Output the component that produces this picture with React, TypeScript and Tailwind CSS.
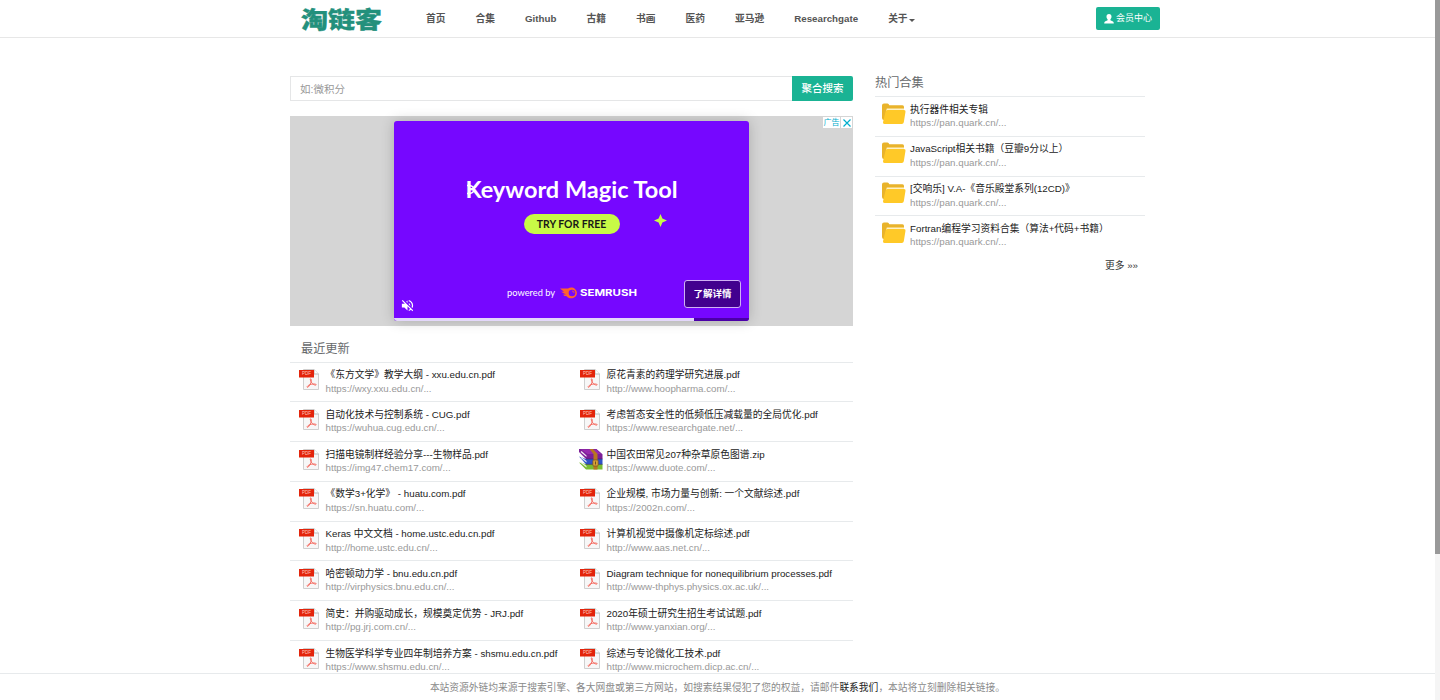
interface Resource {
  title: string;
  url: string;
  zip?: boolean;
}

const NAV = ['首页', '合集', 'Github', '古籍', '书画', '医药', '亚马逊', 'Researchgate'];

const RECENT: [Resource, Resource][] = [
  [
    { title: '《东方文学》教学大纲 - xxu.edu.cn.pdf', url: 'https://wxy.xxu.edu.cn/...' },
    { title: '原花青素的药理学研究进展.pdf', url: 'http://www.hoopharma.com/...' },
  ],
  [
    { title: '自动化技术与控制系统 - CUG.pdf', url: 'https://wuhua.cug.edu.cn/...' },
    { title: '考虑暂态安全性的低频低压减载量的全局优化.pdf', url: 'https://www.researchgate.net/...' },
  ],
  [
    { title: '扫描电镜制样经验分享---生物样品.pdf', url: 'https://img47.chem17.com/...' },
    { title: '中国农田常见207种杂草原色图谱.zip', url: 'https://www.duote.com/...', zip: true },
  ],
  [
    { title: '《数学3+化学》 - huatu.com.pdf', url: 'https://sn.huatu.com/...' },
    { title: '企业规模, 市场力量与创新: 一个文献综述.pdf', url: 'https://2002n.com/...' },
  ],
  [
    { title: 'Keras 中文文档 - home.ustc.edu.cn.pdf', url: 'http://home.ustc.edu.cn/...' },
    { title: '计算机视觉中摄像机定标综述.pdf', url: 'http://www.aas.net.cn/...' },
  ],
  [
    { title: '哈密顿动力学 - bnu.edu.cn.pdf', url: 'http://virphysics.bnu.edu.cn/...' },
    { title: 'Diagram technique for nonequilibrium processes.pdf', url: 'http://www-thphys.physics.ox.ac.uk/...' },
  ],
  [
    { title: '简史：并购驱动成长，规模奠定优势 - JRJ.pdf', url: 'http://pg.jrj.com.cn/...' },
    { title: '2020年硕士研究生招生考试试题.pdf', url: 'http://www.yanxian.org/...' },
  ],
  [
    { title: '生物医学科学专业四年制培养方案 - shsmu.edu.cn.pdf', url: 'https://www.shsmu.edu.cn/...' },
    { title: '综述与专论微化工技术.pdf', url: 'http://www.microchem.dicp.ac.cn/...' },
  ],
];

const HOT: Resource[] = [
  { title: '执行器件相关专辑', url: 'https://pan.quark.cn/...' },
  { title: 'JavaScript相关书籍（豆瓣9分以上）', url: 'https://pan.quark.cn/...' },
  { title: '[交响乐] V.A-《音乐殿堂系列(12CD)》', url: 'https://pan.quark.cn/...' },
  { title: 'Fortran编程学习资料合集（算法+代码+书籍）', url: 'https://pan.quark.cn/...' },
];

function PdfIcon() {
  return (
    <svg className="h-[23px] w-[23px] shrink-0" viewBox="0 0 23 23">
      <path d="M5.500 1.500h10.500l4.500 4.500v15.500h-15z" fill="#f7f7f7" stroke="#cfcfcf" />
      <path d="M16 1.500V6h4.500" fill="#fff" stroke="#b9b9b9" />
      <rect x="1" y="2" width="15" height="7.500" fill="#e3240b" />
      <text x="8.400" y="7.400" textAnchor="middle" fontSize="4.500" fill="#ffc9bf" className="font-['Liberation_Sans',sans-serif]">PDF</text>
      <path d="M12.600 10.800c1 0 .8 2.500.2 4-.8 2-2.300 4.600-3.400 4.600-1.400-.6 1.400-2.600 3.800-3.100 2.400-.5 5-.5 5 .4 0 1-2.600.2-3.900-1.200-1.400-1.500-2.600-4.700-1.700-4.700z" fill="none" stroke="#f4645a" strokeWidth="0.9" />
    </svg>
  );
}

function ZipIcon() {
  return (
    <svg className="h-[23px] w-[24px] shrink-0" viewBox="0 0 24 23">
      {/* bottom book */}
      <path d="M0 14.500 7 21.500h16.500V16H7z" fill="#78bd32" />
      <path d="M1.500 14.800 7.500 19.500V18L2.500 14z" fill="#eef3e2" />
      {/* middle book */}
      <path d="M0 8.500 7 16.300h16.500V11H7z" fill="#2f54c6" />
      <path d="M1.500 9.800 7.500 14.500V13L2.500 9z" fill="#e8ecf6" />
      {/* top book */}
      <path d="M0 1H17.500l6 5.300V11H7L0 4z" fill="#7d1f98" />
      <path d="M2 1.500h15l5 4.500H8.500z" fill="#982bb0" />
      <path d="M1.500 4 7.500 9V7.500L2.500 3z" fill="#f2e8f4" />
      <path d="M7 16.300h16.500M7 11h16.500" stroke="#3b2667" strokeWidth="0.6" />
      <path d="M10.500 1H14l4.500 5v15.500h-4V6z" fill="#b87620" />
      <rect x="13.800" y="12" width="5.400" height="6" rx="1" fill="#d8a337" stroke="#79501a" strokeWidth="0.7" />
      <path d="M16.500 13.500v3" stroke="#70511c" />
    </svg>
  );
}

function FolderIcon() {
  return (
    <svg className="h-[22px] w-[25px] shrink-0" viewBox="0 0 25 22">
      <path d="M0 2.500Q0 .500 2 .500h3.500q1.200 0 1.800 1.800H20.500Q22 2.300 22 4v13H2q-2 0-2-2z" fill="#e9b32b" />
      <path d="M4.800 5.500H22v3H4z" fill="#fff1c4" />
      <path d="M5.500 7H22q1.800 0 1.500 1.700l-1.700 10.500Q21.500 21 19.800 21H2.500Q.6 21 1 19.300L3.600 8.500Q4 7 5.500 7z" fill="#ffc928" />
    </svg>
  );
}

function ResourceItem({ item, folder = false }: { item: Resource; folder?: boolean }) {
  return (
    <div className="flex min-w-0 flex-1 items-start pt-[5.500px]">
      <div className="flex w-[28px] shrink-0">
        {folder ? <FolderIcon /> : item.zip ? <ZipIcon /> : <PdfIcon />}
      </div>
      <div className="min-w-0 whitespace-nowrap text-[9.760px] leading-[13.500px]">
        <div className="text-[#222]">{item.title}</div>
        <div className="text-[#999]">{item.url}</div>
      </div>
    </div>
  );
}

function Header() {
  return (
    <header className="h-[38px] shrink-0 border-b border-[#e7e7e7]">
      <div className="ml-[290px] flex h-[37px] w-[870px] items-center pl-[11px]">
        <div className="w-[125px] origin-left translate-y-[2px] scale-y-[0.860] whitespace-nowrap text-[27px] leading-[37px] font-black text-[#23907c] [-webkit-text-stroke:0.4px_#23907c]">淘链客</div>
        <nav className="flex gap-[30px] whitespace-nowrap pt-px text-[9.75px] font-bold text-[#555]">
          {NAV.map((label) => (
            <a key={label} href="#">{label}</a>
          ))}
          <a href="#" className="flex items-center">
            关于
            <span className="mt-[2px] ml-px border-x-[3px] border-t-[3px] border-x-transparent border-t-[#555]" />
          </a>
        </nav>
        <button className="ml-auto flex h-[23px] w-[64px] items-center justify-center gap-[2px] rounded-[2px] bg-[#1ab394] text-[9px] text-white">
          <svg className="h-[10px] w-[10px]" viewBox="0 0 10 10" fill="currentColor">
            <path d="M5 0C3.300 0 2.500 1 2.500 2.600c0 1.300.4 2.100 1.100 2.700v1L1 7.400Q.2 7.800.2 9.500h9.600Q9.800 7.800 9 7.400L6.400 6.300v-1c.7-.6 1.100-1.400 1.100-2.700C7.500 1 6.700 0 5 0z" />
          </svg>
          会员中心
        </button>
      </div>
    </header>
  );
}

function AdBanner() {
  return (
    <div className="relative mt-[15px] flex h-[210px] justify-center bg-[#d5d5d5] pt-[5px]">
      <div className="relative flex h-[200px] w-[355px] flex-col items-center overflow-hidden rounded-[3px] bg-[#7607ff] shadow-[0_0_14px_rgba(0,0,0,0.2)]">
        <div className="relative mt-[52px] whitespace-nowrap font-['Lato',sans-serif] text-[23.500px] leading-[32px] font-bold text-white">
          Keyword Magic Tool
          {/* the K is drawn mid-animation, with a short loop across its stem */}
          <svg className="absolute top-[10px] left-[2px] h-[14px] w-[12px]" viewBox="0 0 12 14">
            <path d="M0 2.500h3q4 1 4 4T3 10.500H0" fill="none" stroke="#fff" strokeWidth="1.400" />
          </svg>
        </div>
        <div className="mt-[9px] flex h-[20px] w-[96px] items-center justify-center whitespace-nowrap rounded-full bg-[#c8fa46] pt-px font-['Lato',sans-serif] text-[10.400px] font-bold text-[#181818]">TRY FOR FREE</div>
        <div className="mt-[50px] flex h-[18px] w-[129px] items-center whitespace-nowrap text-white">
          <span className="w-[53px] font-['Lato',sans-serif] text-[9.300px]">powered by</span>
          <svg className="h-[12px] w-[18px] shrink-0" viewBox="0 0 18 12">
            <path d="M0 1.500h8C10 .3 13 .2 15 2c2.600 2.400 2.500 6-.1 8-2.500 2-6.500 1.800-8.600-1H4.500L3 7.500h3L1 4.700h3z" fill="#ff642d" />
            <circle cx="12" cy="6" r="3.300" fill="#7607ff" />
            <path d="M12 4q2 0 2 2" fill="none" stroke="#ff642d" strokeWidth="0.8" />
          </svg>
          <span className="ml-[2px] origin-left scale-x-[1.230] font-['Inter',sans-serif] text-[9.300px] font-bold">SEMRUSH</span>
        </div>
        <svg className="absolute top-[92px] left-[259px] h-[15px] w-[15px]" viewBox="0 0 15 15">
          <path d="M7.500 1 9.400 5.600 14 7.500 9.400 9.400 7.500 14 5.600 9.400 1 7.500 5.600 5.600z" fill="#c8fa46" />
        </svg>
        <svg className="absolute bottom-[8px] left-[6px] h-[15px] w-[15px]" viewBox="0 0 24 24" fill="#fff">
          <path d="M16.500 12A4.500 4.500 0 0 0 14 7.970v2.210l2.450 2.450c.03-.2.050-.41.050-.63zm2.500 0c0 .94-.2 1.820-.54 2.640l1.510 1.510A8.800 8.800 0 0 0 21 12c0-4.280-2.990-7.860-7-8.770v2.060c2.890.86 5 3.540 5 6.710zM4.270 3 3 4.270 7.730 9H3v6h4l5 5v-6.730l4.250 4.250c-.67.52-1.420.93-2.250 1.180v2.060a9 9 0 0 0 3.690-1.810L19.730 21 21 19.730l-9-9L4.270 3zM12 4 9.910 6.090 12 8.180V4z" />
        </svg>
        <div className="absolute right-[8px] bottom-[13px] flex h-[28px] w-[57px] items-center justify-center rounded-[3px] border border-[#cfb0f5] bg-[#42008f] pt-px text-[9.500px] font-bold text-white">了解详情</div>
        <div className="absolute inset-x-0 bottom-0 h-[3px] bg-[#4b00a8]">
          <div className="h-full w-[300px] bg-[#e3d7fa]" />
        </div>
      </div>
      <div className="absolute top-[1px] right-[1px] flex h-[11px] gap-px text-[8px] leading-[11px] text-[#00aecd]">
        <span className="w-[17px] whitespace-nowrap bg-white text-center">广告</span>
        <span className="flex w-[11px] items-center justify-center bg-white">
          <svg className="h-[8px] w-[8px]" viewBox="0 0 8 8">
            <path d="M.5.5l7 7M7.500.5l-7 7" stroke="#00aecd" strokeWidth="1.200" />
          </svg>
        </span>
      </div>
    </div>
  );
}

export default function App() {
  return (
    <div className="flex h-[700px] w-[1440px] overflow-hidden bg-white font-['Liberation_Sans','Noto_Sans_CJK_SC',sans-serif]">
      <div className="flex w-[1435px] flex-col">
        <Header />
        <main className="flex min-h-0 flex-1 gap-[22px] overflow-hidden pt-[38px] pl-[290px]">
          <section className="w-[563px]">
            <div className="flex h-[25px] text-[9.75px]">
              <input
                className="min-w-0 flex-1 border border-r-0 border-[#e5e6e7] pt-[2px] pl-[9px] text-[10.500px] text-[#555] outline-none placeholder:text-[#999]"
                placeholder="如:微积分"
              />
              <button className="w-[61px] rounded-r-[2px] bg-[#1ab394] text-[10.500px] font-medium text-white">聚合搜索</button>
            </div>
            <AdBanner />
            <h2 className="h-[35.500px] pt-[14px] pl-[11px] text-[12.200px] leading-[18px] text-[#676a6c]">最近更新</h2>
            {RECENT.map(([left, right]) => (
              <div key={left.url} className="flex h-[39.800px] border-t border-[#e7eaec]">
                <div className="flex w-[281px] pl-[7.500px]"><ResourceItem item={left} /></div>
                <div className="flex w-[282px] pl-[7.500px]"><ResourceItem item={right} /></div>
              </div>
            ))}
          </section>
          <aside className="w-[270px]">
            <h2 className="h-[20px] pt-px text-[12.200px] leading-[13px] text-[#676a6c]">热门合集</h2>
            {HOT.map((item) => (
              <div key={item.title} className="flex h-[39.800px] border-t border-[#e7eaec] pl-[7px]">
                <ResourceItem item={item} folder />
              </div>
            ))}
            <div className="pt-[4px] pr-[7px] text-right text-[9.75px] leading-[14px] text-[#333]">更多 »»</div>
          </aside>
        </main>
        <footer className="h-[27px] shrink-0 border-t border-[#e7eaec] text-center text-[9.75px] leading-[27px] text-[#8a8a8a]">
          本站资源外链均来源于搜索引擎、各大网盘或第三方网站，如搜索结果侵犯了您的权益，请邮件<a href="#" className="text-[#222]">联系我们</a>，本站将立刻删除相关链接。
        </footer>
      </div>
      {/* page scrollbar */}
      <div className="w-[5px] bg-[#f5f5f5]">
        <div className="h-[554px] bg-[#999]" />
      </div>
    </div>
  );
}
